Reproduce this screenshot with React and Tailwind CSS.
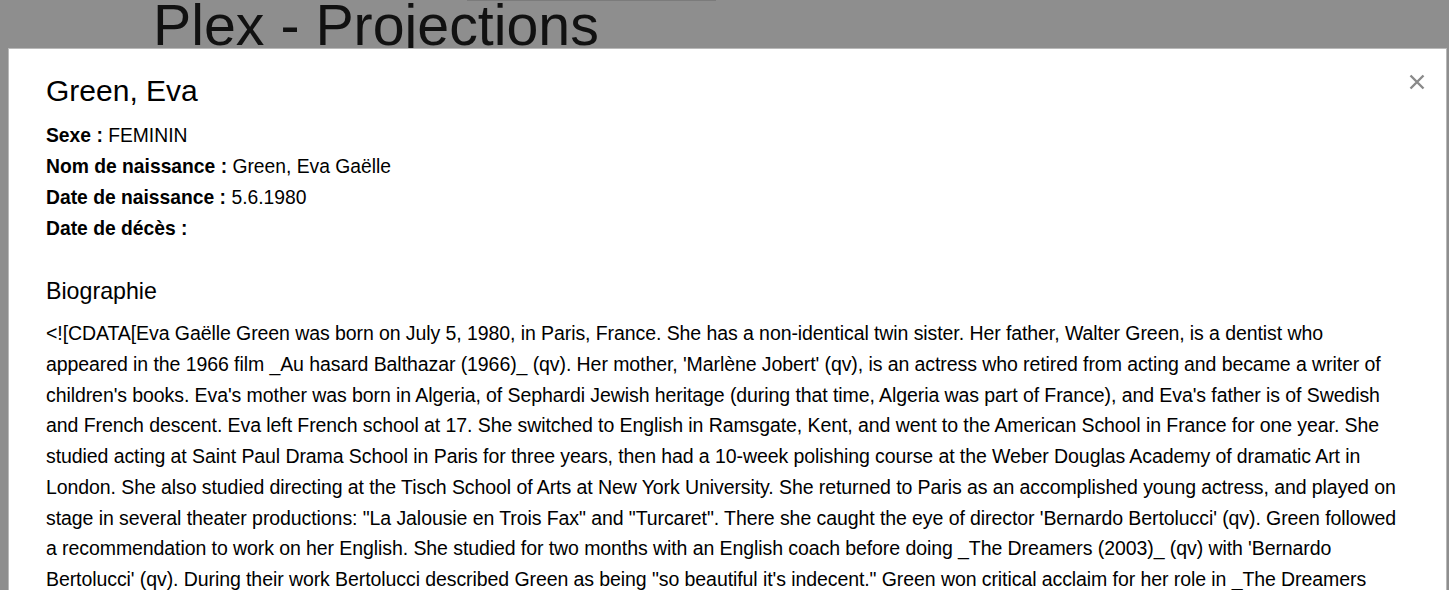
export default function App() {
  const bio =
    "<![CDATA[Eva Gaëlle Green was born on July 5, 1980, in Paris, France. She has a non-identical twin sister. Her father, Walter Green, is a dentist who appeared in the 1966 film _Au hasard Balthazar (1966)_ (qv). Her mother, 'Marlène Jobert' (qv), is an actress who retired from acting and became a writer of children's books. Eva's mother was born in Algeria, of Sephardi Jewish heritage (during that time, Algeria was part of France), and Eva's father is of Swedish and French descent. Eva left French school at 17. She switched to English in Ramsgate, Kent, and went to the American School in France for one year. She studied acting at Saint Paul Drama School in Paris for three years, then had a 10-week polishing course at the Weber Douglas Academy of dramatic Art in London. She also studied directing at the Tisch School of Arts at New York University. She returned to Paris as an accomplished young actress, and played on stage in several theater productions: \"La Jalousie en Trois Fax\" and \"Turcaret\". There she caught the eye of director 'Bernardo Bertolucci' (qv). Green followed a recommendation to work on her English. She studied for two months with an English coach before doing _The Dreamers (2003)_ (qv) with 'Bernardo Bertolucci' (qv). During their work Bertolucci described Green as being \"so beautiful it's indecent.\" Green won critical acclaim for her role in _The Dreamers (2003)_ (qv).";
  return (
    <div
      className="h-[590px] w-[1449px] overflow-hidden bg-[#8e8e8e] text-black"
      style={{ fontFamily: '"Liberation Sans", Arial, sans-serif' }}
    >
      <div className="relative h-[48px] overflow-hidden">
        <div className="absolute left-[467px] top-0 h-px w-[249px] bg-[#7b7b7b]" />
        <h1 className="ml-[153px] mt-[-3px] text-[57.3px] leading-[56px] text-[#111] whitespace-nowrap">
          Plex - Projections
        </h1>
      </div>
      <div className="ml-[8px] h-[600px] w-[1439px] border border-[#b9b9b9] bg-white">
        <div className="relative px-[37px] pt-[25px]">
          <button className="absolute right-[20px] top-[24px] flex h-[18px] w-[18px] items-center justify-center">
            <svg width="16" height="16" viewBox="0 0 16 16">
              <path d="M1.5 1.5 L14.5 14.5 M14.5 1.5 L1.5 14.5" stroke="#8a8a8a" strokeWidth="2.4" fill="none" />
            </svg>
          </button>
          <h2 className="text-[30px] leading-[33px]">Green, Eva</h2>
          <div className="mt-[13px] text-[19.3px] leading-[31px]">
            <div>
              <b>Sexe :</b> FEMININ
            </div>
            <div>
              <b>Nom de naissance :</b> Green, Eva Gaëlle
            </div>
            <div>
              <b>Date de naissance :</b> 5.6.1980
            </div>
            <div>
              <b>Date de décès :</b>
            </div>
          </div>
          <h3 className="mt-[34px] text-[23.2px] leading-[26px]">Biographie</h3>
          <p className="mt-[14px] text-[19.5px] leading-[30.75px] tracking-[-0.08px]">{bio}</p>
        </div>
      </div>
    </div>
  );
}
